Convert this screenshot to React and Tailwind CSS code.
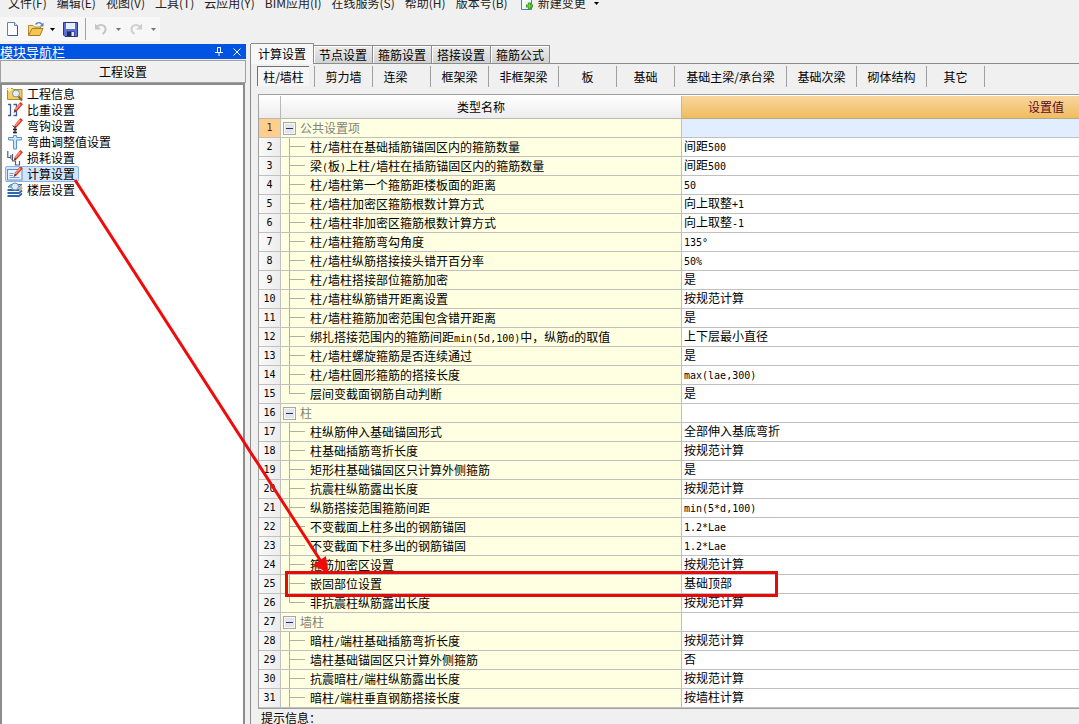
import React from 'react';

const menus = ['文件(F)', '编辑(E)', '视图(V)', '工具(T)', '云应用(Y)', 'BIM应用(I)', '在线服务(S)', '帮助(H)', '版本号(B)'];

const tabs = ['计算设置', '节点设置', '箍筋设置', '搭接设置', '箍筋公式'];

const categories = [
  ['剪力墙', 'w-[58px]'],
  ['连梁', 'w-[58px] pr-3'],
  ['框架梁', 'w-[58px]'],
  ['非框架梁', 'w-[70px]'],
  ['板', 'w-[58px]'],
  ['基础', 'w-[58px]'],
  ['基础主梁/承台梁', 'w-[112px]'],
  ['基础次梁', 'w-[70px]'],
  ['砌体结构', 'w-[70px]'],
  ['其它', 'w-[58px]'],
];

const groups = [
  {
    title: '公共设置项',
    items: [
      ['柱/墙柱在基础插筋锚固区内的箍筋数量', '间距500'],
      ['梁(板)上柱/墙柱在插筋锚固区内的箍筋数量', '间距500'],
      ['柱/墙柱第一个箍筋距楼板面的距离', '50'],
      ['柱/墙柱加密区箍筋根数计算方式', '向上取整+1'],
      ['柱/墙柱非加密区箍筋根数计算方式', '向上取整-1'],
      ['柱/墙柱箍筋弯勾角度', '135°'],
      ['柱/墙柱纵筋搭接接头错开百分率', '50%'],
      ['柱/墙柱搭接部位箍筋加密', '是'],
      ['柱/墙柱纵筋错开距离设置', '按规范计算'],
      ['柱/墙柱箍筋加密范围包含错开距离', '是'],
      ['绑扎搭接范围内的箍筋间距min(5d,100)中，纵筋d的取值', '上下层最小直径'],
      ['柱/墙柱螺旋箍筋是否连续通过', '是'],
      ['柱/墙柱圆形箍筋的搭接长度', 'max(lae,300)'],
      ['层间变截面钢筋自动判断', '是'],
    ],
    closed: true,
  },
  {
    title: '柱',
    items: [
      ['柱纵筋伸入基础锚固形式', '全部伸入基底弯折'],
      ['柱基础插筋弯折长度', '按规范计算'],
      ['矩形柱基础锚固区只计算外侧箍筋', '是'],
      ['抗震柱纵筋露出长度', '按规范计算'],
      ['纵筋搭接范围箍筋间距', 'min(5*d,100)'],
      ['不变截面上柱多出的钢筋锚固', '1.2*Lae'],
      ['不变截面下柱多出的钢筋锚固', '1.2*Lae'],
      ['箍筋加密区设置', '按规范计算'],
      ['嵌固部位设置', '基础顶部'],
      ['非抗震柱纵筋露出长度', '按规范计算'],
    ],
    closed: true,
  },
  {
    title: '墙柱',
    items: [
      ['暗柱/端柱基础插筋弯折长度', '按规范计算'],
      ['墙柱基础锚固区只计算外侧箍筋', '否'],
      ['抗震暗柱/端柱纵筋露出长度', '按规范计算'],
      ['暗柱/端柱垂直钢筋搭接长度', '按墙柱计算'],
    ],
    closed: false,
  },
];

const rows = groups.flatMap((g) => [
  { group: true, name: g.title, value: '' },
  ...g.items.map(([name, value], i) => ({ name, value, last: g.closed && i === g.items.length - 1 })),
]);

/* Latin runs are set in a half-width face beside the full-width characters. */
function Mixed({ text }) {
  return text.split(/([\x20-\x7e°]+)/).map((part, i) =>
    i % 2 ? (
      <span key={i} className="font-['DejaVu_Sans_Mono',monospace] text-[10px]">{part}</span>
    ) : (
      part
    ),
  );
}

function Caret({ className }) {
  return (
    <svg viewBox="0 0 5 3" className={`h-[3px] w-[5px] ${className}`}>
      <path d="M0 0h5L2.5 3z" fill="currentColor" />
    </svg>
  );
}

const Pencil = () => (
  <>
    <path d="M13.500 0l2.500 2.200-6 6.800-3 1.200 1-3.700z" fill="#e03a26" />
    <path d="M12.800 1.800l1 1-5 5.400-1-1z" fill="#f79a86" />
    <path d="M8 7.500l-1.500 3.400L9.500 9.500z" fill="#5a4038" />
  </>
);

const navIcons = {
  info: (
    <>
      <path d="M.5 2.500h5l1 1h8.500v10H.5z" fill="#f2cf63" stroke="#b58a28" />
      <path d="M2.500 1v5M0 3.500h5M1 2l3 3M4 2L1 5" stroke="#fff3a6" strokeWidth="1" />
      <circle cx="9" cy="7.500" r="3.500" fill="#e2effa" stroke="#7b8ea6" />
      <path d="M11.500 10.500L15 14.500" stroke="#8a6a3c" strokeWidth="2" />
    </>
  ),
  weight: (
    <>
      <path d="M1 2.500h2.500v11H1M6.500 2.500H9.500v11H6.500M7 8h2.500" fill="none" stroke="#3c5f9c" strokeWidth="1.300" />
      <Pencil />
    </>
  ),
  hook: (
    <>
      <path d="M8 9v6.500M6 11.500h4M6 14.500h4" stroke="#222" strokeWidth="1.300" />
      <path d="M5.500 7.500l2 1.500" stroke="#222" />
      <Pencil />
    </>
  ),
  bend: (
    <path d="M1.500 3.500h5V1.500h3v2h5v2.500h-5V15h-3V6h-5z" fill="#cfe5f8" stroke="#5e94cc" />
  ),
  loss: (
    <>
      <path d="M.8 1v6.500h3V5M5.500 4v7h3v4h4V11" fill="none" stroke="#4d5f8c" strokeWidth="1.200" />
      <path d="M3 7.500l3 3.500" stroke="#c0504a" />
      <Pencil />
    </>
  ),
  calc: (
    <>
      <rect x=".5" y="3.500" width="14.500" height="10.500" fill="#e8f2fd" stroke="#5f8fc9" />
      <path d="M2.500 7.500h4M2.500 9.500h3.500M2.500 11.500h10" stroke="#7c9dcc" />
      <Pencil />
    </>
  ),
  floor: (
    <>
      <path d="M1 5l3-2.500h11L12 5z" fill="#a9d3f4" stroke="#3c6fae" />
      <path d="M.5 8H12l3-2.500M.5 11H12l3-2.500M.5 14H12l3-2.500" fill="none" stroke="#2f66ab" strokeWidth="1.800" />
      <path d="M12 5.500v4l3-2.500V3.500z" fill="#e6b93c" opacity=".9" />
      <circle cx="8" cy="4.500" r="3.500" fill="#dcecf9" stroke="#6c8cb3" />
    </>
  ),
};

const navItems = [
  ['工程信息', 'info'],
  ['比重设置', 'weight'],
  ['弯钩设置', 'hook'],
  ['弯曲调整值设置', 'bend'],
  ['损耗设置', 'loss'],
  ['计算设置', 'calc'],
  ['楼层设置', 'floor'],
];

function MenuBar() {
  return (
    <nav className="flex h-[11px] flex-none items-end gap-[10px] overflow-hidden pl-2 leading-4 text-[#222]">
      {menus.map((m) => (
        <button key={m} type="button" className="flex-none whitespace-nowrap">{m}</button>
      ))}
      <button type="button" className="flex flex-none items-center gap-1 pl-[2px] whitespace-nowrap">
        <svg viewBox="0 0 14 16" className="h-4 w-[14px]">
          <path d="M1.500 1.500h10v13h-10z" fill="#f4faff" stroke="#4a80bf" />
          <path d="M9.500 7.500v7M6 11h7" stroke="#3da21f" strokeWidth="3.200" />
          <path d="M9.500 8.500v5M7 11h5" stroke="#7fd657" />
        </svg>
        新建变更
        <Caret className="ml-1 text-black" />
      </button>
    </nav>
  );
}

function ToolBar() {
  return (
    <div className="flex h-[33px] flex-none">
      <div className="mt-[6px] flex h-6 w-40 items-center bg-[#f7f7f7] pl-1">
        <button type="button" aria-label="新建" className="w-[22px] pl-[2px]">
          <svg viewBox="0 0 14 16" className="h-4 w-[14px]">
            <path d="M1.500 1.500h7l3 3v10h-10z" fill="#fbfdff" stroke="#6781b0" />
            <path d="M8.500 1.500v3h3" fill="#cfdcf0" stroke="#6781b0" />
            <path d="M11.500 5v9.500h-9" fill="none" stroke="#3c5792" />
          </svg>
        </button>
        <button type="button" aria-label="打开" className="flex items-center gap-[5px] pl-[1px]">
          <svg viewBox="0 0 18 16" className="h-4 w-[18px]">
            <path d="M1.500 14V4.500h4.500l1.500 1.500h6v2" fill="#f5d77c" stroke="#b18a32" />
            <path d="M1.500 14.500l3.500-7h11l-3 7z" fill="#f6c450" stroke="#a97c20" />
            <path d="M8.500 3.500c2-2.500 5-2.500 6.500 0" fill="none" stroke="#5a7fa8" strokeWidth="1.400" />
            <path d="M16.500 1.500V5.500h-4z" fill="#5a7fa8" />
          </svg>
          <Caret className="text-black" />
        </button>
        <button type="button" aria-label="保存" className="pl-2">
          <svg viewBox="0 0 15 15" className="h-[15px] w-[15px]">
            <path d="M.5 .5h14v14H2L.5 13z" fill="#5a6fd0" stroke="#27368c" />
            <path d="M3 1h9v6H3z" fill="#e9eefa" />
            <path d="M4 9.500h7.500V14H4z" fill="#1e2a66" />
            <path d="M8.500 10h2.500v4H8.500z" fill="#e4e8f4" />
          </svg>
        </button>
        <span className="mx-[7px] h-[22px] w-px bg-[#a0a0a0]" />
        <button type="button" aria-label="撤销" className="flex items-center gap-2 pl-[1px]">
          <svg viewBox="0 0 14 14" className="h-[14px] w-[14px]">
            <path d="M3 4.500c4-3 9-1 8.500 3 0 2-1.500 3.500-3 4.500" fill="none" stroke="#c6c6c6" strokeWidth="2" />
            <path d="M1 1.500v6h6z" fill="#c6c6c6" />
          </svg>
          <Caret className="text-[#777]" />
        </button>
        <button type="button" aria-label="重做" className="flex items-center gap-2 pl-2">
          <svg viewBox="0 0 14 14" className="h-[14px] w-[14px]">
            <path d="M11 4.500c-4-3-9-1-8.500 3 0 2 1.500 3.500 3 4.500" fill="none" stroke="#cfcfcf" strokeWidth="2" />
            <path d="M13 1.500v6H7z" fill="#cfcfcf" />
          </svg>
          <Caret className="text-[#777]" />
        </button>
      </div>
    </div>
  );
}

function SidePanel() {
  return (
    <aside className="flex w-[246px] flex-none flex-col">
      <header className="flex h-[15px] flex-none items-center bg-[#0054e3] pr-[5px] leading-[15px] text-white">
        <h2 className="flex-1 text-[13px] leading-[14px]">模块导航栏</h2>
        <button type="button" aria-label="固定" className="mr-[10px]">
          <svg viewBox="0 0 8 9" className="h-[9px] w-2">
            <path d="M2.500 .5h3v5h-3zM0 5.500h8M4 6v3M5.500 .5v5" fill="none" stroke="white" />
          </svg>
        </button>
        <button type="button" aria-label="关闭">
          <svg viewBox="0 0 8 8" className="h-2 w-2">
            <path d="M.5 .5l7 7M7.500 .5l-7 7" stroke="white" />
          </svg>
        </button>
      </header>
      <button type="button" className="mt-px h-[23px] flex-none border border-[#a0a0a0] bg-[#f0f0f0]">工程设置</button>
      <ul className="mr-[1px] min-h-0 flex-1 border-2 border-b-0 border-[#8c8c8c] bg-white pl-[3px] pt-px">
        {navItems.map(([label, icon]) => (
          <li key={label} className="flex h-4">
            <button
              type="button"
              className={
                icon === 'calc'
                  ? 'flex h-4 items-center gap-1 rounded-[2px] bg-[#d3e5fa] pr-1 pl-[2px] leading-4 outline outline-1 -outline-offset-1 outline-[#8ab4e8]'
                  : 'flex h-4 items-center gap-1 pl-[2px] leading-4'
              }
            >
              <svg viewBox="0 0 16 16" className="h-4 w-4">{navIcons[icon]}</svg>
              {label}
            </button>
          </li>
        ))}
      </ul>
    </aside>
  );
}

function TabStrip() {
  return (
    <div role="tablist" className="flex h-5 flex-none items-end border-b border-[#8c8c8c]">
      {tabs.map((t, i) => (
        <button
          key={t}
          type="button"
          role="tab"
          aria-selected={i === 0}
          className={
            i === 0
              ? '-mb-px h-[21px] w-[63px] border-t border-r border-[#8c8c8c] bg-[#f7f7f7]'
              : 'h-[18px] w-[59px] border-t border-r border-[#8c8c8c] bg-linear-to-b from-[#ececec] to-[#d2d2d2] shadow-[inset_1px_1px_0_#fff]'
          }
        >
          {t}
        </button>
      ))}
    </div>
  );
}

function CategoryBar() {
  return (
    <div className="flex h-[30px] flex-none items-start pt-[2px] pl-[6px]">
      <button type="button" className="h-5 w-[52px] border-t border-l border-[#707070] bg-[#f6f6f6]">
        柱/墙柱
      </button>
      <span className="ml-[5px] h-[21px] w-px bg-[#a0a0a0]" />
      {categories.map(([c, w]) => (
        <button key={c} type="button" className={`h-[21px] flex-none border-r border-[#a0a0a0] whitespace-nowrap ${w}`}>
          {c}
        </button>
      ))}
    </div>
  );
}

function SettingsTable() {
  return (
    <div className="ml-[7px] flex-none overflow-hidden border-y border-l border-[#a0a0a0] bg-white pt-px">
      <table className="w-[1151px] table-fixed border-separate border-spacing-0">
        <colgroup>
          <col className="w-[22px]" />
          <col className="w-[401px]" />
          <col className="w-[728px]" />
        </colgroup>
        <thead>
          <tr className="h-[23px]">
            <th className="border-r border-b border-[#b8b8b8] bg-linear-to-b from-white to-[#ececec] p-0" />
            <th className="border-r border-b border-[#b8b8b8] bg-linear-to-b from-white to-[#ececec] p-0 font-normal">类型名称</th>
            <th className="border-b border-[#b8a888] bg-linear-to-b from-[#f8d69c] to-[#efbd5c] p-0 font-normal text-[#5a0a2a]">设置值</th>
          </tr>
        </thead>
        <tbody>
          {rows.map((r, i) => (
            <tr key={i} className="h-[19px]">
              <th
                scope="row"
                className={`border-r border-b border-[#c0c0c0] p-0 font-['DejaVu_Sans_Mono',monospace] text-[10px] leading-[18px] font-normal ${
                  i === 0 ? 'bg-[#fcd08c] text-[#6a1020]' : 'bg-linear-to-r from-[#fafafa] to-[#ececec]'
                }`}
              >
                {i + 1}
              </th>
              <td className="border-r border-b border-[#c0c0c0] bg-[#ffffe1] p-0">
                {r.group ? (
                  <div className="flex h-[18px] items-center gap-1 pl-[2px] leading-[18px] text-[#848478]">
                    <button type="button" aria-label="折叠" className="flex h-[13px] w-[13px] items-center justify-center border border-[#a8a8a8] bg-[#e4e4ec] shadow-[inset_0_0_0_1px_#f8f8f8]">
                      <span className="h-px w-[7px] bg-[#203060]" />
                    </button>
                    {r.name}
                  </div>
                ) : (
                  <div className="flex h-[18px] pl-2 leading-[18px]">
                    <span className="mr-[5px] flex w-4 flex-col">
                      <span className="h-[9px] border-b border-l border-[#b0b0a0]" />
                      <span className={r.last ? 'h-[9px]' : 'h-[9px] border-l border-[#b0b0a0]'} />
                    </span>
                    <span className="whitespace-nowrap"><Mixed text={r.name} /></span>
                  </div>
                )}
              </td>
              <td className={`border-b border-[#c0c0c0] p-0 ${i === 0 ? 'bg-[#e0eeff]' : 'bg-white'}`}>
                <div className="h-[18px] pl-[2px] leading-4 whitespace-nowrap"><Mixed text={r.value} /></div>
              </td>
            </tr>
          ))}
        </tbody>
      </table>
    </div>
  );
}

function Annotations() {
  return (
    <svg className="pointer-events-none absolute top-0 left-0 h-[724px] w-[1079px]" viewBox="0 0 1079 724">
      <path d="M75 180L322 563" stroke="#f00a0a" strokeWidth="3" />
      <path d="M328 573L313 565L326 556z" fill="#f00a0a" />
      <rect x="286.500" y="572.500" width="490" height="23" fill="none" stroke="#e60a0a" strokeWidth="3" />
    </svg>
  );
}

export default function App() {
  return (
    <div className="relative flex h-screen flex-col overflow-hidden bg-[#f0f0f0] font-['Noto_Sans_CJK_SC',sans-serif] text-[12px] leading-4 text-black">
      <MenuBar />
      <ToolBar />
      <div className="flex min-h-0 flex-1">
        <SidePanel />
        <main className="ml-1 flex min-w-0 flex-1 flex-col border-l border-[#8c8c8c]">
          <TabStrip />
          <CategoryBar />
          <SettingsTable />
          <p className="flex-none pt-px pl-[10px]">提示信息：</p>
        </main>
      </div>
      <Annotations />
    </div>
  );
}
